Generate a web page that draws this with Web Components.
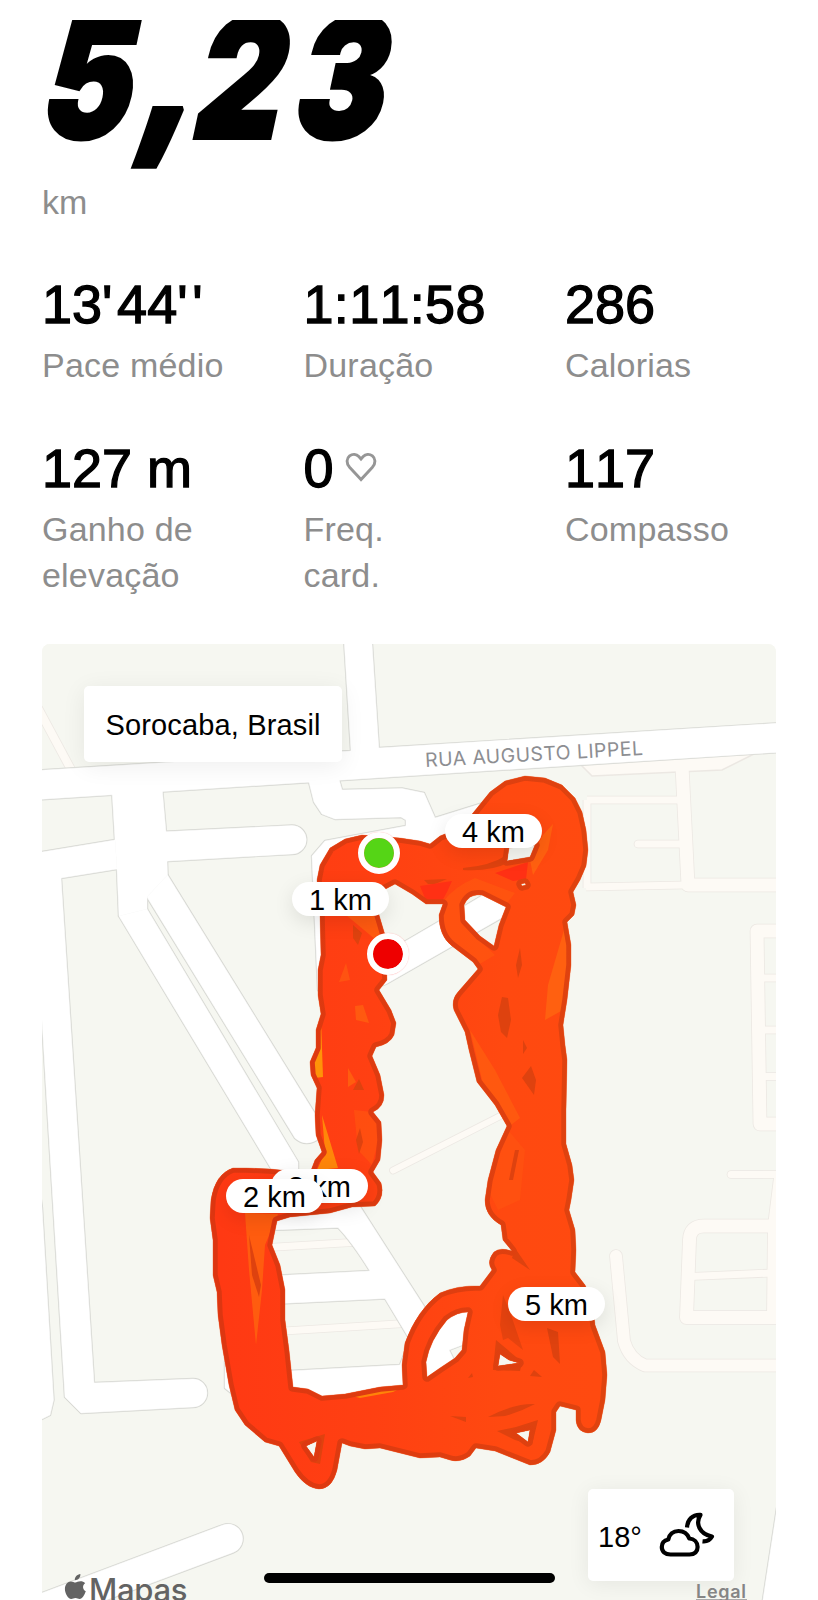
<!DOCTYPE html>
<html lang="pt-BR">
<head>
<meta charset="utf-8">
<title>Corrida</title>
<style>
html,body{margin:0;background:#fff}
body{font-family:"Liberation Sans",Arial,sans-serif;color:#000;height:1600px;overflow:hidden}
</style>
</head>
<body>
<run-page></run-page>
<script>
function define(name, html){
  const t=document.createElement('template');
  t.innerHTML=html;
  customElements.define(name,class extends HTMLElement{
    constructor(){
      super();
      this.attachShadow({mode:'open'}).appendChild(t.content.cloneNode(true));
    }
    connectedCallback(){
      if(this.hasAttribute('x')){
        this.style.left=this.getAttribute('x')+'px';
        this.style.top=this.getAttribute('y')+'px';
      }
      if(this.hasAttribute('color'))this.style.setProperty('--dot',this.getAttribute('color'));
    }
  });
}

define('distance-total',`
<style>
:host{display:block;height:158px;overflow:hidden}
svg{display:block;overflow:hidden}
text{font-family:Inter,sans-serif;font-weight:900;font-size:167px;fill:#000;stroke:#000;stroke-width:4}
.comma{font-family:"Open Sans",sans-serif;font-weight:800;font-size:206px}
</style>
<svg width="380" height="158" viewBox="42 20 380 158">
<text transform="translate(0 138) skewX(-12) scale(.81 1)"><tspan x="44">5</tspan><tspan class="comma" x="166" y="0">,</tspan><tspan x="232" y="0">2</tspan><tspan x="356">3</tspan></text>
</svg>`);

define('stat-item',`
<style>
:host{display:block}
.value{display:flex;align-items:center;box-sizing:border-box;padding-bottom:6px;font-size:54px;line-height:64px;height:69px;font-kerning:none;-webkit-text-stroke:1.3px #000;white-space:nowrap}
.label{font-size:34px;line-height:46.5px;color:#8d8d8d;letter-spacing:.2px}
</style>
<div class="value"><slot name="value"></slot><slot name="icon"></slot></div>
<div class="label"><slot></slot></div>`);

define('heart-icon',`
<style>:host{display:block;margin:0 0 2px 11px;width:32px;height:30px}svg{display:block}</style>
<svg width="32" height="30" viewBox="0 0 32 30"><path d="M16 27.500 L4.800 15.500 C.8 11 1.6 6.400 4.600 3.900 C7.600 1.600 11.400 2 13.800 4.600 L16 7 L18.200 4.600 C20.600 2 24.400 1.600 27.400 3.900 C30.400 6.400 31.200 11 27.200 15.500 Z" fill="none" stroke="#969696" stroke-width="2.900"/></svg>`);

define('distance-pin',`
<style>
:host{display:block;position:absolute;width:97px;height:34px;border-radius:17px;background:#fff;text-align:center;font-size:29px;line-height:37px;white-space:nowrap;box-shadow:0 6px 20px rgba(0,0,0,.1)}
</style><slot></slot>`);

define('route-dot',`
<style>
:host{display:block;position:absolute;width:30px;height:30px;border:6px solid #fff;border-radius:50%;background:var(--dot);background-clip:padding-box;box-shadow:0 0 1px rgba(255,0,0,.35)}
</style>`);

define('place-card',`
<style>
:host{display:block;position:absolute;width:258px;height:76px;border-radius:5px;background:#fff;box-shadow:0 4px 24px rgba(0,0,0,.07);text-align:center;font-size:29px;line-height:79px;letter-spacing:.15px;white-space:nowrap}
</style><slot></slot>`);

define('weather-card',`
<style>
:host{display:flex;align-items:center;box-sizing:border-box;position:absolute;width:146px;height:92px;padding:0 19px 0 10px;justify-content:space-between;border-radius:5px;background:#fff;box-shadow:0 3px 22px rgba(0,0,0,.07);font-size:29px;line-height:40px}
svg{display:block}
span{padding-top:4px}
</style>
<span><slot></slot></span>
<svg width="56" height="48" viewBox="660 1510 56 48" fill="none" stroke="#000" stroke-width="4.200" stroke-linejoin="round">
<path d="M671.5 1553.500 H690.5 C695.700 1553.500 698.600 1550.400 698.600 1546 C698.600 1541.300 695.300 1537.800 690.3 1537.500 C688.6 1533 684.6 1530 679.5 1530 C674 1530 670.3 1533.500 669.300 1538.500 C665 1539.300 662.8 1542 662.8 1546 C662.8 1550.3 666 1553.500 671.5 1553.500 Z"/>
<path d="M688 1526.500 C688.500 1518.500 693.500 1513.300 701.500 1513.800 C696 1522.500 700.500 1533 713 1535.500 C711 1539 708 1540.800 703.500 1540.300"/>
</svg>`);

define('maps-brand',`
<style>
:host{position:absolute;left:22px;top:927px;display:flex;font:500 31px/38px Inter,sans-serif;color:#636363;letter-spacing:-.3px}
svg{display:block;margin:3px 2px 0 0}
</style>
<svg width="23" height="27" viewBox="0 0 22 26"><path fill="#636363" d="M15.7 0C16 3.3 13.4 6 10.4 6C10 3 12.7.3 15.7 0ZM20.3 9C17.6 10.6 17.5 15 20.9 16.6C19.7 20 17.5 24 15 24C13.4 24 12.8 23.1 11 23.1C9.1 23.1 8.4 24 6.9 24C3.8 24 .8 18.5.8 14.4C.8 10.2 3.5 7.2 6.6 7.2C8.4 7.2 9.8 8.3 10.9 8.3C12 8.3 13.7 7.1 15.8 7.1C17.4 7.1 19.2 7.7 20.3 9Z"/></svg>
<slot></slot>`);

define('legal-link',`
<style>
:host{display:block;position:absolute;left:654px;top:937px;font:600 18px/22px Inter,sans-serif;color:#858585;letter-spacing:.7px;border-bottom:1px solid #aaa;height:18px}
</style><slot></slot>`);

define('map-canvas',`
<style>
:host{display:block}
svg{display:block}
text{font:400 19.5px Inter,sans-serif;fill:#8d8e92}
</style>
<svg width="734" height="956" viewBox="42 644 734 956">
<defs>
<g id="cream" fill="none" stroke-linejoin="round">
<path d="M38 708 L74 775" style="stroke-width:calc(var(--w) + 7px)"/>
<path d="M587 800 H679 M587 800 V888" style="stroke-width:calc(var(--w) + 6px)"/>
<path d="M586 887 L684 885" style="stroke-width:calc(var(--w) + 6px)"/>
<path d="M682 766 L688 885 H780" style="stroke-width:calc(var(--w) + 12px)"/>
<path d="M638 844 H682" stroke-linecap="round" style="stroke-width:calc(var(--w) + 6px)"/>
<path d="M780 931 H757 L760 1124 H780" style="stroke-width:calc(var(--w) + 12px)"/>
<path d="M760 978 H780 M760 1030 H780 M760 1076.500 H780" style="stroke-width:calc(var(--w) + 6px)"/>
<path d="M731 1174.500 H780" stroke-linecap="round" style="stroke-width:calc(var(--w) + 6px)"/>
<path d="M779 1174 L772.500 1226 L771.500 1318" style="stroke-width:calc(var(--w) + 8px)"/>
<path d="M780 1226 H704 Q690 1226 689.500 1240 L686.500 1317.500 H780" style="stroke-width:calc(var(--w) + 12px)"/>
<path d="M690 1276.500 L772 1273" style="stroke-width:calc(var(--w) + 6px)"/>
<path d="M616 1256 L624 1341 Q629 1359 645 1365.500 H780" stroke-linecap="round" style="stroke-width:calc(var(--w) + 11px)"/>
<path d="M268 1247.500 L360 1242 M268 1332 L405 1323.500" style="stroke-width:calc(var(--w) + 6px)"/>
<path d="M393 1170.500 L520 1106" stroke-linecap="round" style="stroke-width:calc(var(--w) + 5px)"/>
</g>
<path id="blob" d="M578 762 L592 776 L722 770 L754 754 Z"/>
<g id="roads" stroke-linejoin="round">
<path d="M30 771 L351 751 L379 748 L790 722.500 V751.500 L30 800Z"/>
<path d="M343.500 630 L351 751 H379 L372 644 V630Z"/>
<path d="M112 790 L162 787 L166 832 L167.500 875 L147 897 V909 L119 916 L117 869 L115 840Z"/>
<path d="M30 854 L115 840 L117 869 L61 878 L94 1383 L193 1379 A14 14 0 0 1 193 1407 L81 1413 L65 1397 L48 1120 L42 1020 H30Z"/>
<path d="M30 1120 L42 1208 L53.500 1400 L50 1415 L42 1419 L30 1425Z"/>
<path d="M160 832 L292 825.500 A14 14 0 0 1 292 854 L160 861.500Z"/>
<path d="M119 916 L147 909 L298 1162 V1190 L284 1190Z"/>
<path d="M147 897 L167.500 875 L320 1122 V1138 Q306 1148 295 1138Z"/>
<path d="M308 778 L338 776 L342 790 L402 788.500 L424 793 L435 818 L480 804 L500 798 L492 850 L440 855 L380 872 L335 888 L326 1000 L318 990 L312 856 L325 841 L406 826 V820 L401 817 L335 819 L322 814 L314 802Z"/>
<path d="M375 959 L440 921 L500 885 L510 913 L386 984 L370 990Z"/>
<path d="M270 1205 L359 1205 L425 1308 L470 1300 L470 1342 L449 1350 L454 1360 L455 1372 L420 1400 L285 1400 L280 1371.500 L400 1365 L410 1340 L385 1298.500 L280 1303.500 V1275.500 L370 1271 Q352 1242 338 1227.500 L270 1230Z"/>
<path d="M225 1362 V1388 L240 1400 L250 1380Z"/>
<path d="M30 1597.500 L223 1525 A14.500 14.500 0 0 1 233 1552.500 L90 1606 H30Z"/>
<path d="M777 1508 L762 1606 H790Z"/>
</g>
<path id="trail" fill-rule="evenodd" d="M317 880 L320 865 L330 848 L345 839 L362 835 L400 838 L420 841 L430 844 L440 836 L460 828 L473 813 L490 792 L505 781 L525 776 L545 778 L562 785 L575 798 L582 812 L586 830 L588 850 L586 866 L580 880 L573 892 L576 905 L574 915 L567 922 L571 945 L571 965 L567 1000 L563 1025 L565 1045 L567 1060 L566 1110 L566 1144 L572 1165 L574 1180 L571 1200 L569 1210 L575 1230 L576 1250 L575 1272 L585 1285 L592 1300 L595 1325 L605 1352 L607 1375 L605 1400 L601 1420 Q598 1433 588 1433 Q577 1432 576 1420 L576 1410 L560 1406 L556 1412 L556 1430 L550 1452 Q543 1465 530 1465 L515 1459 L495 1451 L476 1448 L470 1456 Q460 1463 450 1460 L440 1457 L420 1458 L400 1453 L380 1448 L365 1449 L350 1446 L342 1443 L337 1470 Q332 1489 319 1489 Q306 1488 295 1472 L279 1446 L265 1442 L245 1425 L235 1410 L229 1385 L222 1345 L218 1315 L217 1292 L213 1275 L213 1240 L210 1218 L211 1200 Q215 1174 233 1168 L246 1168 L270 1169 L310 1173 L315 1160 L322 1152 L316 1135 L315 1115 L317 1088 L311 1075 L310 1062 L316 1048 L316 1030 L321 1014 L318 995 L318 970 L321 955 L320 915Z
M395 884 L378 893 L376 905 L385 935 L387 980 L379 990 L391 1010 L396 1023 L394 1035 Q390 1044 376 1047 L372 1056 L380 1075 L384 1095 Q384 1107 373 1112 L381 1122 L382 1140 L380 1160 L373 1172 L381 1183 Q385 1197 375 1206 L352 1207 L330 1213 L290 1217 L277 1221 L272 1245 L280 1265 L285 1290 L285 1320 L289 1350 L293 1387 L308 1389 L322 1396 L345 1394 L380 1387 L403 1385 L402 1365 L405 1343 Q417 1310 440 1293 Q458 1285 480 1286 L492 1270 Q486 1262 494 1252 Q500 1247 512 1251 L503 1240 L501 1225 Q485 1216 485 1200 L488 1180 L496 1150 L507 1126 L495 1105 L477 1082 L469 1050 L465 1032 L454 1010 Q451 1000 458 992 L478 969 L473 962 L452 946 Q439 936 439 915 L443 904 L426 904 L412 894Z
M465 920 L464 905 Q469 893 482 895 L506 907 L499 925 L494 946 L480 936Z M509 848 L535 845 L530 857 L507 861Z M521 884 L525 883 L526 885 L522 886Z
M427 1377 L426 1362 Q430 1340 447 1320 Q457 1312 468 1312 L464 1330 L462 1350 L455 1358 L440 1368Z M500 1354 L509 1360 L519 1363 L498 1366Z M516 1433 L530 1430 L528 1442Z M306 1446 L317 1441 L314 1457Z"/>
<clipPath id="trailclip"><path id="tc" clip-rule="evenodd" d=""/></clipPath>
<linearGradient id="heat" gradientUnits="userSpaceOnUse" x1="220" y1="0" x2="600" y2="0"><stop offset="0" stop-color="#ff3913"/><stop offset=".4" stop-color="#ff4012"/><stop offset=".75" stop-color="#ff4910"/><stop offset="1" stop-color="#ff4a10"/></linearGradient>
<linearGradient id="edge" gradientUnits="userSpaceOnUse" x1="220" y1="0" x2="600" y2="0"><stop offset="0" stop-color="#dd3611"/><stop offset="1" stop-color="#df430f"/></linearGradient>
</defs>
<rect x="42" y="644" width="734" height="956" fill="#f6f7f1"/>
<use href="#cream" stroke="#ece8e3" style="--w:2.600px"/><use href="#blob" fill="#fdfaf5" stroke="#ece8e3" stroke-width="1.500"/><use href="#cream" stroke="#fdfaf5" style="--w:1px"/>
<use href="#roads" fill="#fff" stroke="#d7d8d3" stroke-width="2.400"/><use href="#roads" fill="#fff" stroke="#fff" stroke-width=".5"/>
<text transform="translate(425.500 767) rotate(-3.200)" textLength="218">RUA AUGUSTO LIPPEL</text>
<use href="#trail" fill="url(#heat)"/>
<g clip-path="url(#trailclip)">
<g fill="#ff6010">
<path d="M345 890 L373 903 L382 945 L364 930 L346 915Z" opacity=".8"/><path d="M564 930 L569 960 L563 1010 L545 1020 L548 985Z"/><path d="M533 875 L530 860 L543 835 L553 824 L548 850Z"/>
<path d="M355 1006 L363 1005 L369 1023 L356 1020Z" opacity=".8"/><path d="M346 963 L350 980 L339 982Z" opacity=".6"/><path d="M348 1068 L356 1082 L348 1087Z" opacity=".9"/>
<path d="M354 1110 L372 1112 L381 1130 L372 1165 L358 1150Z" opacity=".45"/>
<path d="M470 1030 L495 1070 L520 1118 L507 1128 L484 1088Z" opacity=".7"/><path d="M508 1130 L525 1150 L520 1200 L498 1210 L488 1190Z" opacity=".3"/>
<path d="M245 1213 L278 1214 L265 1245 L262 1290 L256 1345 L249 1270Z" opacity=".9"/>
<path d="M430 935 Q435 895 475 878 L515 893 L500 912 L470 895 Q457 905 463 925 L495 955 L478 965 Z" opacity=".45"/>
</g>
<g fill="#ff9308"><path d="M321 1020 L323 1077 L315 1078 L313 1063Z"/><path d="M322 1115 L338 1168 L317 1170 L325 1152Z" opacity=".85"/><path d="M352 1396 L378 1389 L403 1387 L393 1392 L360 1398Z" opacity=".8"/></g>
<g fill="#de420f">
<path d="M353 925 L362 933 L358 945 L353 938Z"/><path d="M502 997 L508 998 L511 1020 L507 1038 L501 1032 L498 1015Z"/><path d="M531 1066 L536 1080 L534 1095 L522 1078Z"/><path d="M520 948 L522 965 L518 978 L516 965Z"/><path d="M515 1150 L519 1150 L513 1180 L509 1180Z"/><path d="M523 1040 L527 1048 L523 1054Z"/><path d="M359 1079 L364 1090 L353 1090Z"/><path d="M360 1128 L363 1142 L359 1154 L356 1140Z"/>
<path d="M249 1235 L261 1285 L259 1297 L252 1275Z"/>
<path d="M503 1295 L511 1315 L523 1350 L508 1338 L503 1340 L500 1325Z" opacity=".75"/><path d="M547 1328 L558 1332 L560 1364 L553 1357Z"/><path d="M530 1376 L534 1370 L542 1377Z"/><path d="M488 1417 Q515 1403 535 1404 Q520 1412 505 1416Z"/><path d="M450 1416 L466 1417 L466 1422Z"/><path d="M468 1378 L472 1373 L473 1377Z"/><path d="M424 880 L447 879 L435 884 L428 884Z"/><path d="M515 1248 L530 1270 L512 1258Z"/><path d="M497 1431 L516 1427 L538 1420 L532 1445 L515 1440Z"/><path d="M299 1442 L325 1434 L320 1464 L311 1462Z"/><path d="M496 1340 L522 1362 L520 1371 L493 1370Z"/><path d="M463 868 Q490 866 507 855 L530 850 L510 862 Q490 872 463 870Z"/>
</g>
<path d="M420 886 L452 881 L447 892 L441 903 L427 903Z M495 873 L528 862 L526 879 L513 881Z" fill="#ff3014"/>
<use href="#trail" fill="none" stroke="url(#edge)" stroke-width="9.500" stroke-linejoin="round"/>
</g>
<use href="#trail" fill="none" stroke="#e6501c" stroke-width=".6" opacity=".6"/>
</svg>`);

define('route-map',`
<style>
:host{display:block;position:relative;height:956px;border-radius:8px 8px 0 0;overflow:hidden;background:#f6f7f1}
</style>
<map-canvas></map-canvas><slot></slot>`);

define('home-indicator',`
<style>:host{display:block;position:absolute;left:264px;top:1573px;width:291px;height:10px;border-radius:5px;background:#000}</style>`);

define('run-page',`
<style>
:host{display:block;box-sizing:border-box;height:1600px;overflow:hidden;padding:20px 42px 0;background:#fff;position:relative}
.unit{font-size:34px;line-height:48px;color:#8d8d8d}
.stats{display:grid;grid-template-columns:261.500px 261.500px 1fr;row-gap:48.500px;margin:46.500px 0 45px}
.freq{display:block;width:100px}
.prime{letter-spacing:4.700px}
.time{letter-spacing:.3px}
</style>
<distance-total></distance-total>
<div class="unit">km</div>
<div class="stats">
<stat-item><span slot="value">13<span class="prime">'</span>44<span class="prime">''</span></span>Pace médio</stat-item>
<stat-item><span slot="value" class="time">1:11:58</span>Duração</stat-item>
<stat-item><span slot="value">286</span>Calorias</stat-item>
<stat-item><span slot="value">127 m</span>Ganho de<br>elevação</stat-item>
<stat-item><span slot="value">0</span><heart-icon slot="icon"></heart-icon><span class="freq">Freq. card.</span></stat-item>
<stat-item><span slot="value">117</span>Compasso</stat-item>
</div>
<route-map>
<route-dot x="316" y="188" color="#55d516"></route-dot>
<route-dot x="325" y="289" color="#ee0000"></route-dot>
<distance-pin x="250" y="238">1 km</distance-pin>
<distance-pin x="403" y="170">4 km</distance-pin>
<distance-pin x="229" y="525">3 km</distance-pin>
<distance-pin x="184" y="535">2 km</distance-pin>
<distance-pin x="466" y="643">5 km</distance-pin>
<place-card x="42" y="42">Sorocaba, Brasil</place-card>
<weather-card x="546" y="845">18°</weather-card>
<maps-brand>Mapas</maps-brand>
<legal-link>Legal</legal-link>
</route-map>
<home-indicator></home-indicator>`);

/* The clip region reuses the trail outline. */
const canvas=document.querySelector('run-page').shadowRoot.querySelector('route-map').shadowRoot.querySelector('map-canvas').shadowRoot;
canvas.getElementById('tc').setAttribute('d',canvas.getElementById('trail').getAttribute('d'));
</script>
</body>
</html>
